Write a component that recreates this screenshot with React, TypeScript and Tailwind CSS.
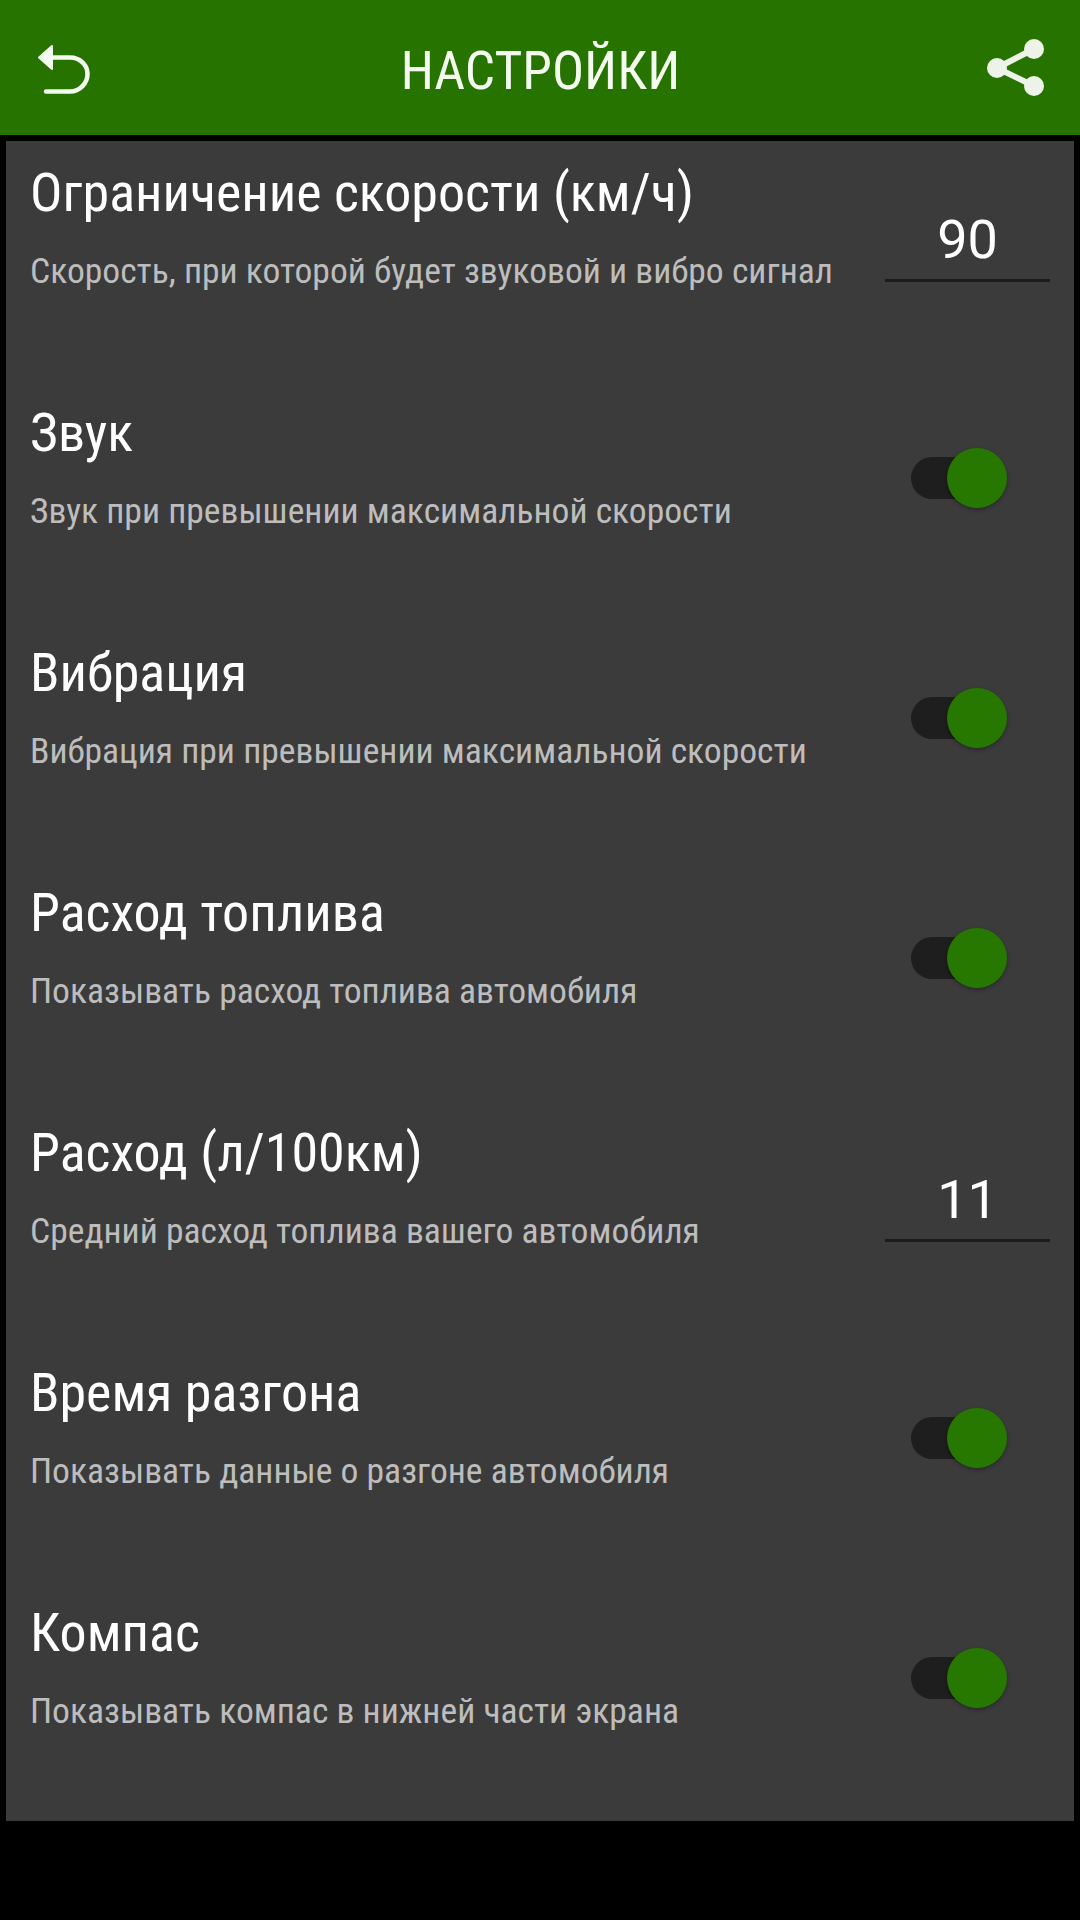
const rows: { t: string; s: string; v?: string }[] = [
  { t: "Ограничение скорости (км/ч)", s: "Скорость, при которой будет звуковой и вибро сигнал", v: "90" },
  { t: "Звук", s: "Звук при превышении максимальной скорости" },
  { t: "Вибрация", s: "Вибрация при превышении максимальной скорости" },
  { t: "Расход топлива", s: "Показывать расход топлива автомобиля" },
  { t: "Расход (л/100км)", s: "Средний расход топлива вашего автомобиля", v: "11" },
  { t: "Время разгона", s: "Показывать данные о разгоне автомобиля" },
  { t: "Компас", s: "Показывать компас в нижней части экрана" },
];

function Row({ t, s, v }: { t: string; s: string; v?: string }) {
  return (
    <div className="flex h-[240px] items-start pl-[24px] pr-[24px]">
      <div className="flex-1 min-w-0">
        <div className="text-[54px] leading-[60px] mt-[22px] text-white whitespace-nowrap [font-stretch:75%]">{t}</div>
        <div className="text-[35.6px] leading-[42px] mt-[27px] text-[#bdbdbd] whitespace-nowrap [font-stretch:75%]">{s}</div>
      </div>
      {v ? (
        <div className="w-[165px] mt-[62px] h-[79px] border-b-[3px] border-[#1c1c1c] text-center text-[54px] leading-[74px] text-white">{v}</div>
      ) : (
        <div className="w-[165px] mt-[67px] flex justify-center pr-[17px]">
          <div className="relative w-[96px] h-[60px] flex items-center">
            <div className="w-[80px] h-[42px] rounded-full bg-[#1e1e1e]" />
            <div className="absolute right-0 top-0 w-[60px] h-[60px] rounded-full bg-[#277800] shadow-[0_2px_4px_rgba(0,0,0,0.3)]" />
          </div>
        </div>
      )}
    </div>
  );
}

export default function App() {
  return (
    <div className="w-[1080px] h-[1920px] bg-black font-['Roboto',sans-serif]">
      <header className="h-[135px] bg-[#267300] flex items-center justify-between pl-[38px] pr-[36px]">
        <div className="w-[56px] mt-[5px]">
          <svg width="53" height="50" viewBox="0 0 53 50" fill="none">
            <path d="M14 12.5H32C42 12.5 49.5 20 49.5 29C49.5 38 42 46.5 32 46.5H8" stroke="#f4fbef" strokeWidth="4.5" strokeLinecap="round" />
            <path d="M1 12.5L14 1V24Z" fill="#f4fbef" stroke="#f4fbef" strokeWidth="2" strokeLinejoin="round" />
          </svg>
        </div>
        <div className="text-[53.5px] leading-[60px] mt-[7px] text-[#f4fbef] [font-stretch:75%]">НАСТРОЙКИ</div>
        <svg width="57" height="57" viewBox="0 0 57 57" fill="none">
          <path d="M47 10L10 29L47 47" stroke="#eef3ea" strokeWidth="6" />
          <circle cx="47" cy="10" r="10" fill="#eef3ea" />
          <circle cx="10" cy="29" r="10" fill="#eef3ea" />
          <circle cx="47" cy="47" r="10" fill="#eef3ea" />
        </svg>
      </header>
      <main className="mt-[6px] mx-[6px] h-[1680px] bg-[#3b3b3b]">
        {rows.map((r) => (
          <Row key={r.t} {...r} />
        ))}
      </main>
    </div>
  );
}
